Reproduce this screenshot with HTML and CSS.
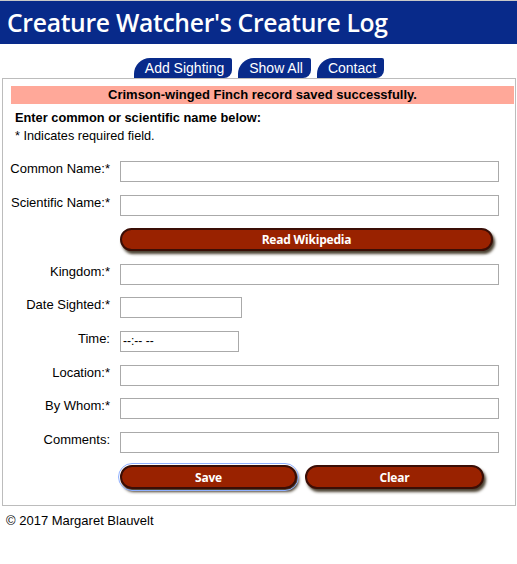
FILE: index.html
```html
<!DOCTYPE html>
<html>
<head>
<meta charset="utf-8">
<link rel="stylesheet" href="styles.css">
</head>
<body>
<header class="masthead"><h1>Creature Watcher's Creature Log</h1></header>
<nav class="tabs">
  <a class="tab">Add Sighting</a>
  <a class="tab">Show All</a>
  <a class="tab">Contact</a>
</nav>
<main class="panel">
  <div class="banner">Crimson-winged Finch record saved successfully.</div>
  <p class="intro">Enter common or scientific name below:</p>
  <p class="note">* Indicates required field.</p>
  <form class="form">
    <label class="lbl">Common Name:*</label><input class="field" type="text">
    <label class="lbl">Scientific Name:*</label><input class="field" type="text">
    <span></span><button type="button" class="btn wiki">Read Wikipedia</button>
    <label class="lbl">Kingdom:*</label><input class="field" type="text">
    <label class="lbl">Date Sighted:*</label><input class="field date" type="text">
    <label class="lbl">Time:</label><div class="field time">--:-- --</div>
    <label class="lbl">Location:*</label><input class="field" type="text">
    <label class="lbl">By Whom:*</label><input class="field" type="text">
    <label class="lbl">Comments:</label><input class="field" type="text">
    <span></span>
    <div class="actions">
      <button type="button" class="btn save">Save</button>
      <button type="button" class="btn">Clear</button>
    </div>
  </form>
</main>
<footer class="foot">© 2017 Margaret Blauvelt</footer>
</body>
</html>
```
FILE: styles.css
```css
* { box-sizing: border-box; }
body {
  margin: 0;
  font-family: "Liberation Sans", Arial, sans-serif;
  color: #000;
  background: #fff;
  border-top: 1px solid #c8c8c8;
}
.masthead {
  background: #082a8a;
  height: 43px;
  padding: 0 0 0 7px;
  display: flex;
  align-items: center;
}
.masthead h1 {
  margin: 0;
  color: #fff;
  font-family: "Open Sans", "DejaVu Sans", sans-serif;
  font-weight: 600;
  font-size: 24.7px;
  letter-spacing: -0.3px;
  line-height: 1;
  position: relative;
  top: 1px;
}
.tabs {
  display: flex;
  justify-content: center;
  gap: 6px;
  margin-top: 14px;
  height: 20px;
  margin-left: 1px;
}
.tab {
  background: #082a8a;
  color: #fff;
  font-size: 14px;
  line-height: 20px;
  padding: 0 8px 0 11px;
  border-radius: 16px 2px 8px 0;
}
.panel {
  margin: 0 1px 0 2px;
  border: 1px solid #bcbcbc;
  padding: 7px 1px 16px 8px;
}
.banner {
  background: #ffa899;
  font-weight: bold;
  font-size: 13px;
  text-align: center;
  line-height: 18px;
  height: 18px;
}
.intro {
  margin: 6px 0 0 4px;
  font-size: 12.8px;
  font-weight: bold;
  line-height: 16px;
}
.note {
  margin: 3px 0 0 4px;
  font-size: 12.7px;
  line-height: 14px;
}
.form {
  display: grid;
  grid-template-columns: 106px 379px;
  column-gap: 10px;
  row-gap: 12.6px;
  margin: 18px 0 0 -7px;
  align-items: center;
}
.lbl {
  text-align: right;
  white-space: nowrap;
  font-size: 13px;
  line-height: 15px;
  position: relative;
  top: -3px;
}
.field {
  height: 21px;
  border: 1px solid #aaaaaa;
  background: #fff;
  font-size: 12px;
  padding: 0 2px;
  margin: 0;
  width: 379px;
  font-family: "Liberation Sans", Arial, sans-serif;
}
.date { width: 122px; }
.time {
  width: 119px;
  line-height: 19px;
  color: #000;
}
.btn {
  background: #992200;
  color: #fff;
  border: 2px solid #3a0e06;
  border-radius: 12px;
  box-shadow: 2px 3px 3px #4a4030;
  font-family: "Open Sans", "DejaVu Sans", sans-serif;
  font-weight: 700;
  font-size: 12px;
  height: 23px;
  padding: 0;
  letter-spacing: -0.2px;
}
.wiki { width: 373px; }
.actions {
  display: flex;
  gap: 8px;
}
.actions .btn { width: 177px; height: 24px; }
.actions .btn + .btn { width: 179px; }
.save { outline: 1px solid #8fb0ff; outline-offset: 1px; }
.foot {
  font-size: 13px;
  margin: 7px 0 0 6px;
}
```
